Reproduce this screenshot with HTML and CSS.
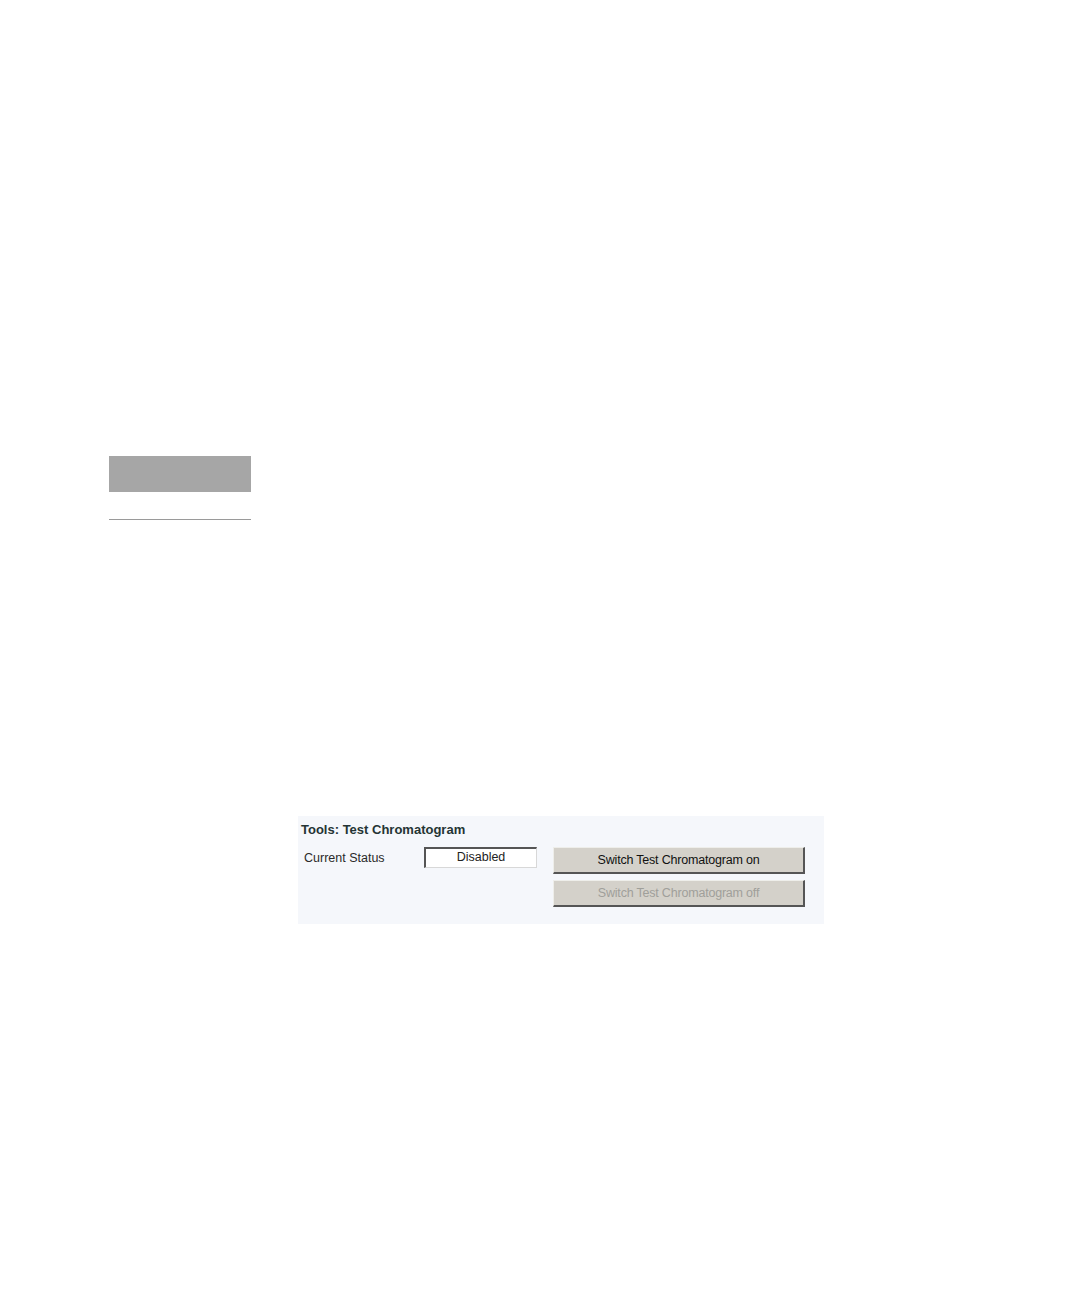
FILE: index.html
```html
<!DOCTYPE html>
<html>
<head>
<meta charset="utf-8">
<link rel="stylesheet" href="styles.css">
</head>
<body>
<div class="page">
  <div class="side">
    <div class="gray-box"></div>
    <div class="rule"></div>
  </div>
  <div class="panel">
    <div class="title">Tools: Test Chromatogram</div>
    <div class="row">
      <div class="label">Current Status</div>
      <div class="status">Disabled</div>
      <div class="buttons">
        <div class="btn">Switch Test Chromatogram on</div>
        <div class="btn disabled">Switch Test Chromatogram off</div>
      </div>
    </div>
  </div>
</div>
</body>
</html>
```
FILE: styles.css
```css
html, body {
  margin: 0;
  padding: 0;
  background: #ffffff;
}
.page {
  width: 1080px;
  height: 1296px;
  position: relative;
  font-family: "Liberation Sans", Arial, sans-serif;
}
.side {
  padding-top: 456px;
  padding-left: 109px;
  width: 142px;
}
.gray-box {
  width: 142px;
  height: 36px;
  background: #a6a6a6;
}
.rule {
  margin-top: 27px;
  width: 142px;
  height: 1px;
  background: #9a9a9a;
}
.panel {
  margin-top: 296px;
  margin-left: 298px;
  width: 526px;
  height: 108px;
  box-sizing: border-box;
  background: #f5f7fb;
  padding: 6px 0 0 3px;
}
.title {
  font-size: 13px;
  font-weight: bold;
  color: #243434;
  line-height: 16px;
}
.row {
  display: flex;
  align-items: flex-start;
  margin-top: 9px;
}
.label {
  width: 120px;
  padding-left: 3px;
  font-size: 12.5px;
  color: #2a2a2a;
  line-height: 18px;
  margin-top: 2px;
}
.status {
  width: 113px;
  height: 21px;
  box-sizing: border-box;
  background: #fff;
  border-top: 2px solid #555;
  border-left: 2px solid #555;
  border-right: 1px solid #d8d8d8;
  border-bottom: 1px solid #d8d8d8;
  font-size: 12.5px;
  color: #222;
  text-align: center;
  line-height: 17px;
}
.buttons {
  margin-left: 16px;
  display: flex;
  flex-direction: column;
  gap: 6px;
}
.btn {
  width: 252px;
  height: 27px;
  box-sizing: border-box;
  background: #d4d1ca;
  border-top: 1px solid #eeeeea;
  border-left: 1px solid #eeeeea;
  border-right: 2px solid #555;
  border-bottom: 2px solid #555;
  font-size: 12.5px;
  color: #111;
  text-align: center;
  line-height: 24px;
  letter-spacing: -0.2px;
}
.btn.disabled {
  color: #a09f9a;
}
```
